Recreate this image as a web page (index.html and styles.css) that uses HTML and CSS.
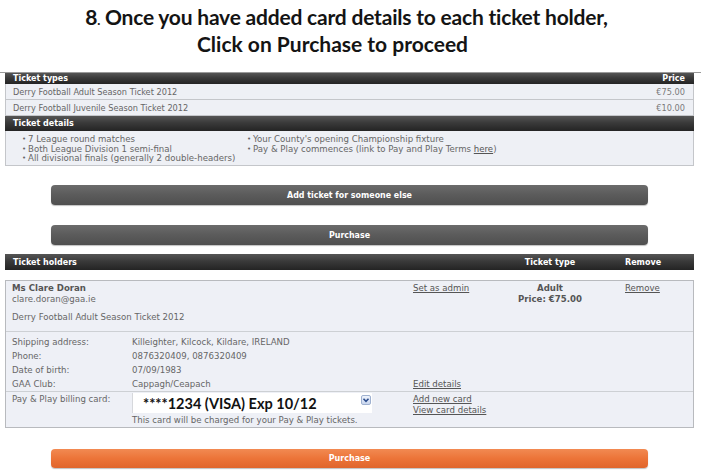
FILE: index.html
```html
<!DOCTYPE html>
<html>
<head>
<meta charset="utf-8">
<link rel="stylesheet" href="styles.css">
</head>
<body>
<header class="title">
  <div class="line1">8<span class="dot">.</span> Once you have added card details to each ticket holder,</div>
  <div class="line2">Click on Purchase to proceed</div>
</header>

<section class="panel">
  <div class="th"><span>Ticket types</span><span>Price</span></div>
  <div class="tr"><span>Derry Football Adult Season Ticket 2012</span><span class="price">€75.00</span></div>
  <div class="tr"><span>Derry Football Juvenile Season Ticket 2012</span><span class="price">€10.00</span></div>
  <div class="th th2"><span>Ticket details</span></div>
  <div class="details">
    <ul class="col1">
      <li><span>7 League round matches</span></li>
      <li><span>Both League Division 1 semi-final</span></li>
      <li><span>All divisional finals (generally 2 double-headers)</span></li>
    </ul>
    <ul class="col2">
      <li><span>Your County's opening Championship fixture</span></li>
      <li><span>Pay &amp; Play commences (link to Pay and Play Terms <a class="lnk">here</a>)</span></li>
    </ul>
  </div>
</section>

<div class="actions">
  <div class="btn">Add ticket for someone else</div>
  <div class="btn">Purchase</div>
</div>

<section class="holders">
  <div class="th th3 hgrid">
    <span>Ticket holders</span><span></span><span class="center">Ticket type</span><span></span><span>Remove</span>
  </div>
  <div class="card">
    <div class="card-top cgrid">
      <div>
        <div class="name">Ms Clare Doran</div>
        <div>clare.doran@gaa.ie</div>
        <div class="ticket">Derry Football Adult Season Ticket 2012</div>
      </div>
      <div><a class="lnk">Set as admin</a></div>
      <div class="center bold"><div>Adult</div><div>Price: €75.00</div></div>
      <div></div>
      <div><a class="lnk">Remove</a></div>
    </div>
    <div class="info">
      <div class="row"><span>Shipping address:</span><span>Killeighter, Kilcock, Kildare, IRELAND</span><span></span></div>
      <div class="row"><span>Phone:</span><span>0876320409, 0876320409</span><span></span></div>
      <div class="row"><span>Date of birth:</span><span>07/09/1983</span><span></span></div>
      <div class="row"><span>GAA Club:</span><span>Cappagh/Ceapach</span><span><a class="lnk">Edit details</a></span></div>
    </div>
    <div class="billing">
      <div class="blabel">Pay &amp; Play billing card:</div>
      <div>
        <div class="select">
          <span class="seltext">****1234 (VISA) Exp 10/12</span>
          <span class="arrow"><svg width="8" height="8" viewBox="0 0 8 8"><path d="M1.5 2.8 L4 5.3 L6.5 2.8" fill="none" stroke="#2b4c8c" stroke-width="1.6"/></svg></span>
        </div>
        <div class="note">This card will be charged for your Pay &amp; Play tickets.</div>
      </div>
      <div class="blinks"><a class="lnk">Add new card</a><a class="lnk">View card details</a></div>
    </div>
  </div>
</section>

<div class="final">
  <div class="btn orange">Purchase</div>
</div>
</body>
</html>
```

FILE: styles.css
```css
* { box-sizing: border-box; }
html, body { margin: 0; padding: 0; }
body {
  width: 701px;
  height: 473px;
  overflow: hidden;
  background: #fff;
  font-family: "DejaVu Sans", Verdana, sans-serif;
  font-size: 8px;
  color: #5e5e5e;
}
ul { margin: 0; padding: 0; list-style: none; }

.title {
  height: 73px;
  padding-top: 5px;
  border-bottom: 1px solid #9a9a9a;
  font-family: Lato, "Open Sans", sans-serif;
  font-weight: 700;
  font-size: 21px;
  line-height: 23px;
  color: #141414;
  text-align: center;
  letter-spacing: -0.2px;
}
.line1 { padding-right: 8px; }
.line2 { padding-right: 36px; letter-spacing: 0; }
.title .dot { font-size: 13px; }

.panel { margin: 0 7px 0 5px; }
.th {
  height: 11px;
  background: linear-gradient(#555 0%, #3a3a3a 45%, #242424 100%);
  color: #fff;
  font-weight: bold;
  display: flex;
  justify-content: space-between;
  align-items: center;
  padding: 0 9px 0 8px;
}
.th2 { height: 15px; }
.tr {
  height: 16px;
  display: flex;
  justify-content: space-between;
  align-items: center;
  padding: 0 8px 0 7px;
  background: #eef0f5;
  border: 1px solid #c4c6ca;
  border-top: none;
  color: #666;
  font-size: 8.2px;
}
.price { color: #7a7a7a; }
.details {
  height: 35px;
  display: flex;
  padding: 4px 0 0 16px;
  background: #eef0f5;
  border: 1px solid #c4c6ca;
  border-top: none;
  line-height: 9.7px;
  color: #666;
  font-size: 8.6px;
}
.col1 { width: 225px; }
.details li { display: flex; }
.details li::before { content: "•"; width: 6px; flex: none; font-size: 7px; }
.lnk { color: #555; text-decoration: underline; }

.actions {
  padding: 19px 53px 0 51px;
  display: flex;
  flex-direction: column;
  gap: 20px;
}
.btn {
  height: 20px;
  border-radius: 4px;
  background: linear-gradient(#6b6b6b 0%, #5b5b5b 50%, #4f4f4f 100%);
  box-shadow: 0 1px 1px rgba(0,0,0,0.25);
  color: #fff;
  font-family: "DejaVu Sans Condensed", "DejaVu Sans", sans-serif;
  font-weight: bold;
  font-size: 8.8px;
  display: flex;
  align-items: center;
  justify-content: center;
}

.holders { margin: 9px 7px 0 5px; }
.th3 { height: 16px; }
.hgrid {
  display: grid;
  grid-template-columns: 400px 92px 90px 30px 1fr;
  padding: 0 8px;
}
.center { text-align: center; }
.bold { font-weight: bold; color: #555; }

.card {
  margin-top: 10px;
  border: 1px solid #b8babe;
  background: #eef0f6;
  color: #666;
  font-size: 8.6px;
}
.cgrid {
  display: grid;
  grid-template-columns: 401px 92px 90px 30px 1fr;
}
.card-top {
  padding: 2px 6px 8px 6px;
  line-height: 11px;
}
.name { font-weight: bold; color: #555; }
.ticket { margin-top: 7px; }

.info {
  border-top: 1px solid #cdd0d4;
  padding: 3px 6px 0 6px;
}
.row {
  display: grid;
  grid-template-columns: 120px 281px 1fr;
  line-height: 14px;
}
.billing {
  border-top: 1px solid #cdd0d4;
  display: grid;
  grid-template-columns: 120px 281px 1fr;
  padding: 1px 6px 1px 6px;
  line-height: 11px;
}
.blabel { padding-top: 1px; }
.blinks { display: flex; flex-direction: column; padding-top: 1px; }
.select {
  width: 240px;
  height: 20px;
  background: #fff;
  border-left: 1px solid #d6d8dc;
  display: flex;
  align-items: center;
  justify-content: space-between;
  padding: 0 1px 0 10px;
}
.seltext {
  font-family: Lato, "Open Sans", sans-serif;
  font-weight: 700;
  font-size: 14.5px;
  color: #111;
  line-height: 16px;
  padding-top: 2px;
}
.arrow {
  width: 10px;
  height: 10px;
  align-self: flex-start;
  margin-top: 2px;
  border: 1px solid #9fb1d0;
  border-radius: 2px;
  background: linear-gradient(#eef3fc, #c9d6ee);
  display: flex;
  align-items: center;
  justify-content: center;
}
.note { margin-top: 2px; }

.final { padding: 21px 53px 0 51px; }
.btn.orange {
  height: 19px;
  background: linear-gradient(#f28a52 0%, #ec7438 50%, #e0652c 100%);
  font-family: "DejaVu Sans", sans-serif;
  font-size: 8px;
}
```
